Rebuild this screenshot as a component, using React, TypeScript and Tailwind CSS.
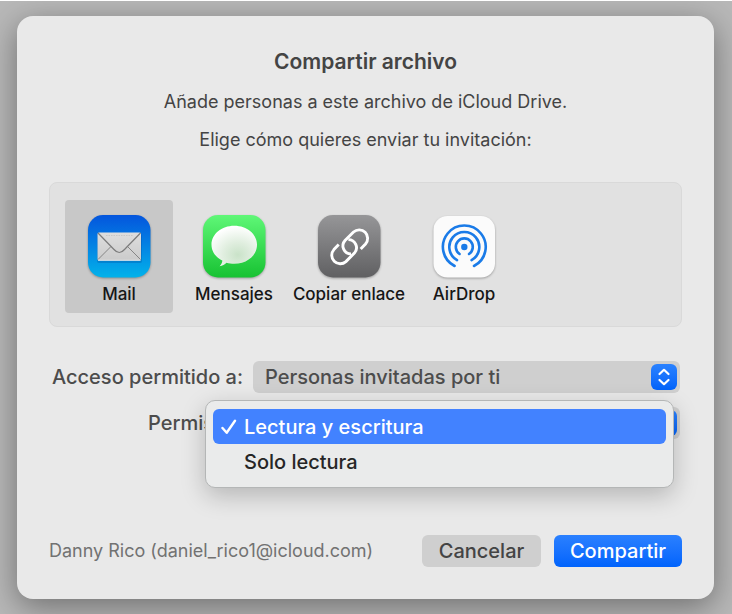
import { useState } from "react";
import type { ReactNode } from "react";

function MailIcon() {
  return (
    <svg width="63" height="63" viewBox="0 0 63 63" aria-hidden="true" className="drop-shadow-[0_1px_1px_rgba(0,0,0,0.3)]">
      <defs>
        <linearGradient id="mailBg" x1="0" y1="0" x2="0" y2="1">
          <stop offset="0" stopColor="#0455dd" />
          <stop offset="1" stopColor="#02b2ea" />
        </linearGradient>
        <linearGradient id="mailPaper" x1="0" y1="0" x2="0" y2="1">
          <stop offset="0" stopColor="#dedede" />
          <stop offset="1" stopColor="#cbcbcb" />
        </linearGradient>
      </defs>
      <rect width="62.500" height="62.500" rx="15" fill="url(#mailBg)" />
      <rect x="9" y="19" width="45" height="29" rx="2" fill="#003c8c" opacity="0.25" />
      <rect x="9.500" y="17.500" width="43.500" height="28" rx="1.500" fill="url(#mailPaper)" />
      <path d="M10 44.500 L23 31.500 M52.500 44.500 L39.500 31.500" stroke="#858585" strokeWidth="1" fill="none" />
      <path d="M10 18 L26 34.500 Q31.300 40.500 36.500 34.500 L52.500 18" stroke="#7c7c7c" strokeWidth="1.200" fill="none" />
      <path d="M10 45.300 H52.500" stroke="#f2f2f2" strokeWidth="0.800" />
      <path d="M18 20.500 H45" stroke="#bdbdbd" strokeWidth="0.700" strokeDasharray="1.500 1" />
    </svg>
  );
}

function MessagesIcon() {
  return (
    <svg width="63" height="63" viewBox="0 0 63 63" aria-hidden="true" className="drop-shadow-[0_1px_1px_rgba(0,0,0,0.3)]">
      <defs>
        <linearGradient id="msgBg" x1="0" y1="0" x2="0" y2="1">
          <stop offset="0" stopColor="#5ff777" />
          <stop offset="1" stopColor="#17c232" />
        </linearGradient>
        <radialGradient id="msgBubble" cx="0.580" cy="0.720" r="0.700">
          <stop offset="0" stopColor="#c9e2c8" />
          <stop offset="0.450" stopColor="#e0eedf" />
          <stop offset="1" stopColor="#ffffff" />
        </radialGradient>
      </defs>
      <rect width="62.500" height="62.500" rx="15" fill="url(#msgBg)" />
      <path
        d="M31.300 10.800 C44 10.800 54 19.200 54 29.800 C54 40.500 44 48.800 31.300 48.800 C28.400 48.800 26 48.400 23.500 47.700 C21.700 49.500 19.500 50.800 16.600 51.200 C18.500 49.300 19.300 47.500 19.300 45.600 C12.500 42.200 8.500 36.500 8.500 29.800 C8.500 19.200 18.500 10.800 31.300 10.800 Z"
        fill="url(#msgBubble)"
      />
    </svg>
  );
}

function LinkIcon() {
  return (
    <svg width="63" height="63" viewBox="0 0 63 63" aria-hidden="true" className="drop-shadow-[0_1px_1px_rgba(0,0,0,0.3)]">
      <defs>
        <linearGradient id="linkBg" x1="0" y1="0" x2="0" y2="1">
          <stop offset="0" stopColor="#969698" />
          <stop offset="1" stopColor="#606062" />
        </linearGradient>
      </defs>
      <rect width="62.500" height="62.500" rx="15" fill="url(#linkBg)" />
      <g fill="none" stroke="#fff" strokeWidth="2.900">
        <path d="M42.700 34 L47.500 29 A8.500 8.500 0 0 0 35.500 17 L27 25.500 A8.100 8.100 0 0 0 33 39" />
        <path d="M42.700 34 L47.500 29 A8.500 8.500 0 0 0 35.500 17 L27 25.500 A8.100 8.100 0 0 0 33 39" transform="rotate(180 31.700 31.800)" />
      </g>
    </svg>
  );
}

function AirDropIcon() {
  return (
    <svg width="63" height="63" viewBox="0 0 63 63" aria-hidden="true" className="drop-shadow-[0_1px_1px_rgba(0,0,0,0.3)]">
      <rect x="0.500" y="1" width="61.500" height="61.500" rx="14" fill="#fbfbfb" />
      <circle cx="31.300" cy="32" r="3.200" fill="#1a7be8" />
      <g fill="none" stroke="#1a7be8" strokeWidth="2.600" strokeLinecap="round">
        <path d="M26.600 39 A8.500 8.500 0 1 1 36 39" />
        <path d="M24 45.100 A15 15 0 1 1 38.600 45.100" />
        <path d="M21.600 51 A21.400 21.400 0 1 1 41 51" />
      </g>
    </svg>
  );
}

function Stepper() {
  return (
    <span className="pointer-events-none absolute right-[3px] top-[3px] flex size-[26px] items-center justify-center rounded-md bg-linear-to-b from-[#2a82ff] to-[#0163fa]">
      <svg width="14" height="18" viewBox="0 0 14 18" fill="none" stroke="#fff" strokeWidth="2.200" strokeLinecap="round" strokeLinejoin="round" aria-hidden="true">
        <path d="M2.500 6 L7 1.800 L11.500 6 M2.500 12 L7 16.200 L11.500 12" />
      </svg>
    </span>
  );
}

const methods: { id: string; label: string; icon: ReactNode }[] = [
  { id: "mail", label: "Mail", icon: <MailIcon /> },
  { id: "messages", label: "Mensajes", icon: <MessagesIcon /> },
  { id: "link", label: "Copiar enlace", icon: <LinkIcon /> },
  { id: "airdrop", label: "AirDrop", icon: <AirDropIcon /> },
];

const permissions = ["Lectura y escritura", "Solo lectura"];

const selectClass =
  "block h-8 w-full appearance-none rounded-md bg-[#cfcfcf] pl-3 pr-9 text-[20px] font-medium leading-8 text-[#4c4c4c] outline-none";

export default function App() {
  const [method, setMethod] = useState("mail");
  const [permission, setPermission] = useState(permissions[0]);

  return (
    <main className="min-h-screen overflow-hidden border-t border-white bg-[#b8b8b8] pt-[15px] pr-[18px] pb-[15px] pl-[17px] font-['Inter','Liberation_Sans',sans-serif] font-medium text-[#4c4c4c]">
      <section
        role="dialog"
        aria-labelledby="title"
        className="rounded-2xl bg-[#e9e9e9] px-8 pt-8 pb-8 shadow-[0_8px_32px_rgba(0,0,0,0.4)]"
      >
        <header className="flex flex-col gap-3.5 text-center text-[18px] font-normal leading-6 text-[#444444]">
          <h1 id="title" className="text-[21px] font-semibold leading-7">Compartir archivo</h1>
          <p>Añade personas a este archivo de iCloud Drive.</p>
          <p>Elige cómo quieres enviar tu invitación:</p>
        </header>

        <div className="mt-[30px] flex gap-[7px] rounded-lg border border-[#d9d9d9] bg-[#e1e1e1] px-[15px] pt-[17px] pb-[13px]">
          {methods.map((m) => (
            <button
              key={m.id}
              type="button"
              aria-pressed={m.id === method}
              onClick={() => setMethod(m.id)}
              className={
                m.id === method
                  ? "flex w-[108px] flex-col items-center gap-1 rounded bg-[#c8c8c8] pt-[15px] pb-[7px]"
                  : "flex w-[108px] flex-col items-center gap-1 rounded pt-[15px] pb-[7px]"
              }
            >
              {m.icon}
              <span className="whitespace-nowrap text-[17px] leading-6 text-[#161616]">{m.label}</span>
            </button>
          ))}
        </div>

        <div className="mt-[34px] grid grid-cols-[194px_1fr] items-center gap-x-2.5 gap-y-3.5 pr-0.5">
          <label htmlFor="access" className="whitespace-nowrap text-right text-[20px] leading-8">Acceso permitido a:</label>
          <div className="relative">
            <select id="access" className={selectClass}>
              <option>Personas invitadas por ti</option>
            </select>
            <Stepper />
          </div>

          <label htmlFor="permission" className="whitespace-nowrap text-right text-[20px] leading-8">Permisos:</label>
          <div className="relative">
            <select id="permission" className={selectClass} value={permission} onChange={(e) => setPermission(e.target.value)}>
              {permissions.map((p) => (
                <option key={p}>{p}</option>
              ))}
            </select>
            <Stepper />
            <div
              role="menu"
              aria-label="Permisos"
              className="absolute -top-[7px] right-1.5 -left-12 rounded-[10px] border border-[#b4b6b6] bg-[#eaebeb] px-[7px] py-2 shadow-[0_8px_24px_rgba(0,0,0,0.22)]"
            >
              {permissions.map((p) => (
                <button
                  key={p}
                  type="button"
                  role="menuitemradio"
                  aria-checked={p === permission}
                  onClick={() => setPermission(p)}
                  className={
                    p === permission
                      ? "flex h-[35px] w-full items-center rounded-md bg-[#4282ff] pl-2 text-[20px] text-white"
                      : "flex h-[35px] w-full items-center rounded-md pl-2 text-[20px] text-[#262626]"
                  }
                >
                  <span className="w-[23px]">
                    {p === permission && (
                      <svg width="16" height="16" viewBox="0 0 16 16" fill="none" stroke="currentColor" strokeWidth="2.400" strokeLinecap="round" strokeLinejoin="round" aria-hidden="true">
                        <path d="M1.500 9 L5.700 13.800 L14 1.800" />
                      </svg>
                    )}
                  </span>
                  {p}
                </button>
              ))}
            </div>
          </div>
        </div>

        <footer className="mt-24 flex items-center gap-[13px]">
          <p className="mr-auto text-[18px] font-normal leading-6 text-[#727272]">Danny Rico (daniel_rico1@icloud.com)</p>
          <button type="button" className="h-8 w-[119px] rounded-md bg-[#cfcfcf] text-[20px] text-[#444444]">Cancelar</button>
          <button type="button" className="h-8 w-32 rounded-md bg-linear-to-b from-[#2a80ff] to-[#0063fc] text-[20px] text-white">Compartir</button>
        </footer>
      </section>
    </main>
  );
}
